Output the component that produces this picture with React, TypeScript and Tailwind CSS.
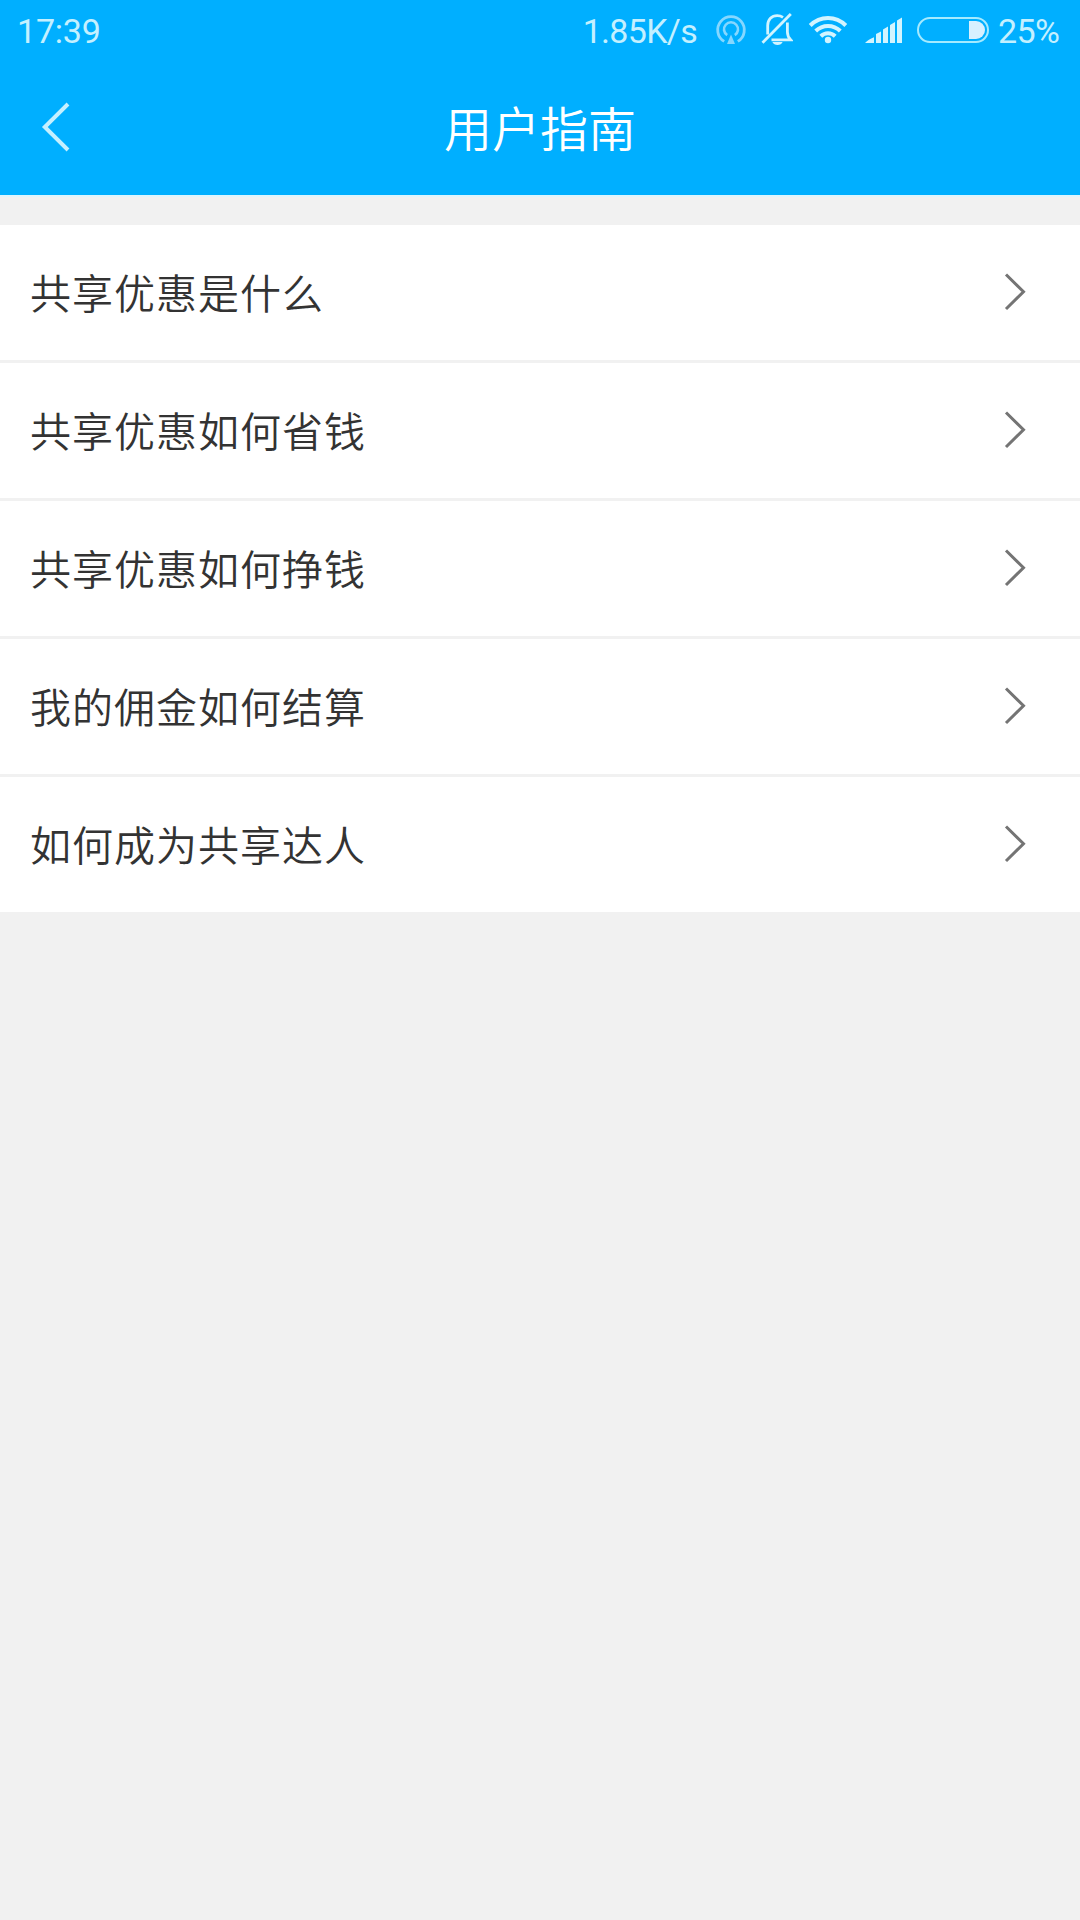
import React from "react";

const guides = [
  "共享优惠是什么",
  "共享优惠如何省钱",
  "共享优惠如何挣钱",
  "我的佣金如何结算",
  "如何成为共享达人",
];

const statusText =
  "block whitespace-nowrap font-['Roboto','Noto_Sans',sans-serif] text-[34px] leading-[62px] font-normal text-[#c4f0ff]";

function Hotspot() {
  return (
    <svg className="ml-[18px] h-[62px] w-[32px] shrink-0" viewBox="0 0 32 62" fill="none" stroke="#85d7ff" strokeWidth="2.8">
      <path d="M9.2 41.4A13.3 13.3 0 1 1 22.8 41.4" />
      <path d="M12.2 35.2A7 7 0 1 1 19.8 35.2" strokeWidth="2.6" />
      <path d="M16 34.5l4 9.5h-8z" fill="#85d7ff" stroke="none" />
    </svg>
  );
}

function MutedBell() {
  return (
    <svg className="ml-[14px] h-[62px] w-[32px] shrink-0" viewBox="0 0 32 62" fill="none" stroke="#d2f4ff" strokeWidth="2.8">
      <path d="M1.5 42.8L29.8 14" />
      <path d="M6.7 34.5V25.5C6.7 19.2 10.8 15.6 16.2 15.6c2.3 0 4.2.6 5.8 1.7" />
      <path d="M26.4 22.5V32c0 3.4 1.2 5.6 3.2 7.8H10.5" />
      <path d="M11.4 42h10.2c-.8 2-2.6 3-5 3s-4.400-1-5.200-3z" fill="#d2f4ff" stroke="none" />
    </svg>
  );
}

function Wifi() {
  return (
    <svg className="ml-[15px] h-[62px] w-[40px] shrink-0" viewBox="0 0 40 62" fill="none" stroke="#d2f4ff" strokeWidth="4">
      <path d="M2.200 25.500C12.200 15.500 27.800 15.500 37.800 25.500" />
      <path d="M7.700 31C14.600 24.200 25.400 24.200 32.300 31" />
      <path d="M12.800 36.300C16.900 32.300 23.100 32.300 27.200 36.300" />
      <circle cx="20" cy="40" r="3.200" fill="#d2f4ff" stroke="none" />
    </svg>
  );
}

function Signal() {
  return (
    <svg className="ml-[17px] h-[62px] w-[38px] shrink-0" viewBox="0 0 38 62" fill="#d2f4ff">
      <path d="M0 43c2.500-2.500 5-4.300 9-5.800V43zM11 34v9h5V31.500zM18 29.500V43h5V26.500zM25 25v18h5V22zM32 20.500V43h5V17.500z" />
    </svg>
  );
}

function Battery() {
  return (
    <svg className="ml-[14px] h-[62px] w-[72px] shrink-0" viewBox="0 0 72 62" fill="none">
      <rect x="1" y="18" width="70" height="24" rx="12" stroke="#a5eaff" strokeWidth="2" />
      <path d="M52 21h7a9 9 0 0 1 0 18h-7z" fill="#d8f0ff" />
    </svg>
  );
}

export default function App() {
  return (
    <main className="flex min-h-[1920px] w-[1080px] flex-col bg-[#f1f1f1] font-['Noto_Sans_CJK_SC',sans-serif]">
      <header className="flex h-[195px] flex-col bg-[#00afff]">
        <div className="flex h-[62px] items-start pr-[18px] pl-[17px]">
          <span className={`${statusText} tracking-[-0.2px]`}>17:39</span>
          <span className={`${statusText} ml-auto tracking-[-0.7px]`}>1.85K/s</span>
          <Hotspot />
          <MutedBell />
          <Wifi />
          <Signal />
          <Battery />
          <span className={`${statusText} ml-[9px] w-[64px] tracking-[-0.6px]`}>25%</span>
        </div>
        <div className="grid h-[133px] grid-cols-[1fr_auto_1fr] items-start">
          <button aria-label="返回" className="ml-[40px] h-[133px] w-[32px]">
            <svg className="h-[133px] w-[32px]" viewBox="0 0 32 133" fill="none" stroke="#c5f0ff" strokeWidth="4">
              <path d="M28 42L4.800 65L28 88" />
            </svg>
          </button>
          <h1 className="pt-[29px] text-[48px] leading-[70px] font-[350] text-white">用户指南</h1>
        </div>
      </header>
      <div className="h-[30px] border-t-2 border-[#dff5fd]" />
      <ul className="flex flex-col gap-[3px]">
        {guides.map((title) => (
          <li key={title} className="flex h-[135px] items-start justify-between bg-white pr-[53px] pl-[30px]">
            <span className="pt-[35px] text-[41px] leading-[62px] font-[350] tracking-[1px] text-[#333]">{title}</span>
            <svg className="h-[135px] w-[24px]" viewBox="0 0 24 135" fill="none" stroke="#747474" strokeWidth="3">
              <path d="M3 49.500L20.500 66.700L3 84" />
            </svg>
          </li>
        ))}
      </ul>
    </main>
  );
}
